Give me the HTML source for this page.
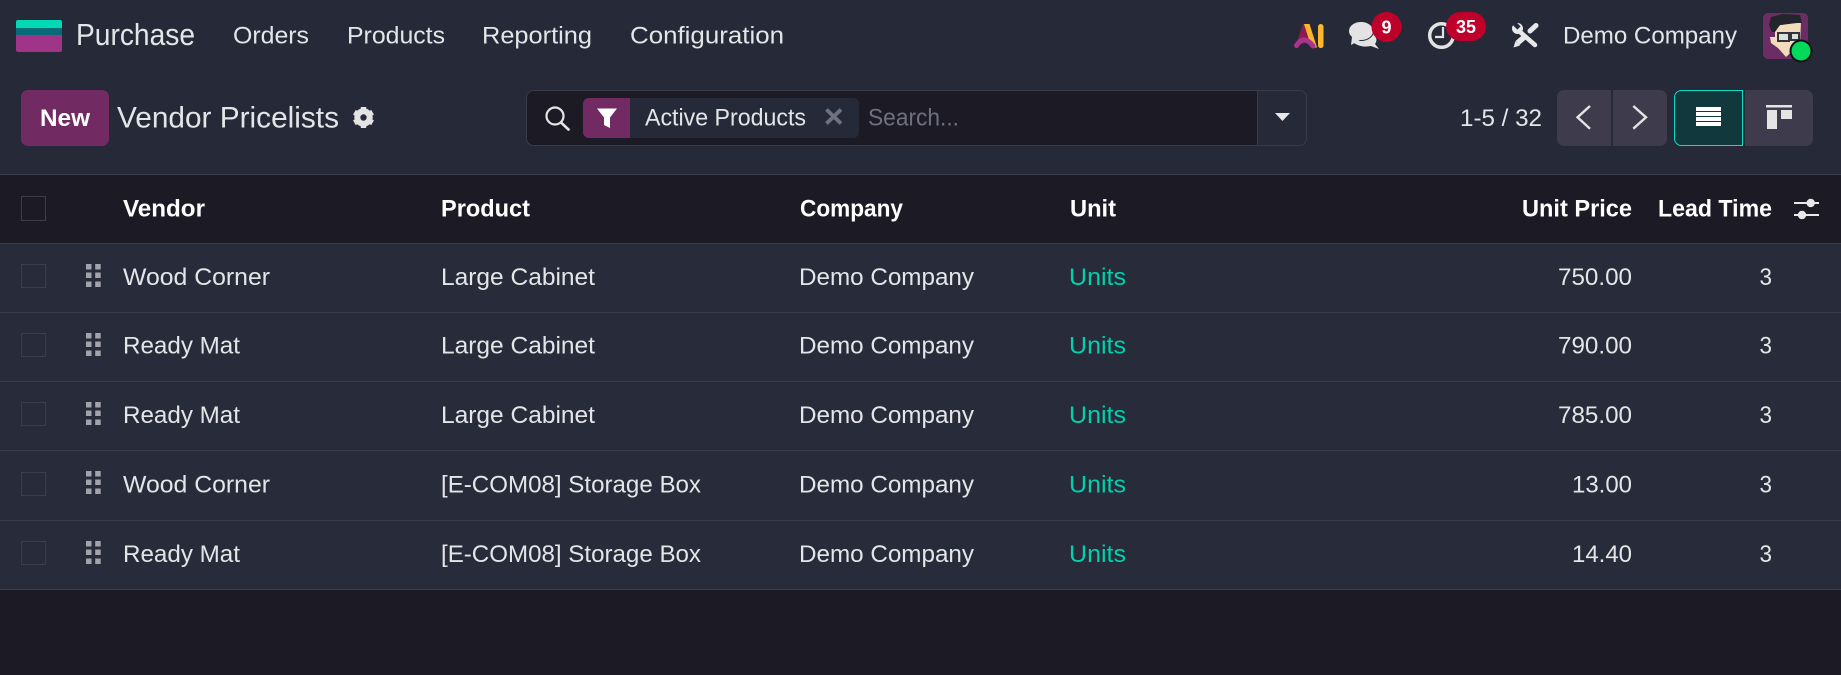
<!DOCTYPE html>
<html lang="en">
<head>
<meta charset="utf-8">
<title>Vendor Pricelists</title>
<style>
html,body{margin:0;padding:0;background:#1c1a24;width:1841px;height:675px;overflow:hidden}
svg{display:block}
text{font-family:"Liberation Sans",sans-serif;fill:#e4e5e8;font-size:24px}
.b{font-weight:700;fill:#fff}
.u{fill:#00d1ac}
</style>
</head>
<body>
<svg xmlns="http://www.w3.org/2000/svg" width="1841" height="675" viewBox="0 0 1841 675">
<defs>
<g id="h" fill="#a2a3ab"><rect x="86" y="0" width="5.500" height="5.500"/><rect x="95.200" y="0" width="5.500" height="5.500"/><rect x="86" y="8.500" width="5.500" height="5.500"/><rect x="95.200" y="8.500" width="5.500" height="5.500"/><rect x="86" y="17.500" width="5.500" height="5.500"/><rect x="95.200" y="17.500" width="5.500" height="5.500"/></g>
</defs>
<rect width="1841" height="675" fill="#1c1a24"/>
<rect width="1841" height="174" fill="#262a38"/>
<rect y="174" width="1841" height="1" fill="#3d3c4b"/>

<!-- logo -->
<path d="M16 35H62V50a2 2 0 0 1-2 2H18a2 2 0 0 1-2-2Z" fill="#a03588"/>
<rect x="16" y="28" width="46" height="7" fill="#066a78"/>
<path d="M16 28V22a2 2 0 0 1 2-2H60a2 2 0 0 1 2 2V28Z" fill="#00d9b4"/>

<text x="76" y="45" style="font-size:31px" textLength="119" lengthAdjust="spacingAndGlyphs">Purchase</text>
<text x="233" y="43.500" textLength="76" lengthAdjust="spacingAndGlyphs">Orders</text>
<text x="347" y="43.500" textLength="98" lengthAdjust="spacingAndGlyphs">Products</text>
<text x="482" y="43.500" textLength="110" lengthAdjust="spacingAndGlyphs">Reporting</text>
<text x="630" y="43.500" textLength="154" lengthAdjust="spacingAndGlyphs">Configuration</text>

<!-- AI logo -->
<path d="M1303 24H1308L1313 42L1296 45Z" fill="#8a1b4c"/>
<path d="M1304 24H1309.500L1317 47.500H1311.500Z" fill="#fdb52b"/>
<path d="M1296.500 45.500Q1304 34 1313 46" fill="none" stroke="#a6358b" stroke-width="5" stroke-linecap="round"/>
<rect x="1318" y="24" width="5.500" height="24" rx="2.700" fill="#fdb92d"/>

<!-- chat -->
<path d="M1364 31q8 1 11 5q3 4 0 8l4 5l-8-3q-10 2-17-3Z" fill="#e3e3e3"/>
<ellipse cx="1361" cy="31" rx="12.500" ry="9.500" fill="#e3e3e3" stroke="#262a38" stroke-width="1"/>
<path d="M1352 37l-1 8l9-5Z" fill="#e3e3e3"/>
<circle cx="1386.500" cy="27" r="15" fill="#bf002b"/>
<text class="b" x="1381.500" y="33.500" style="font-size:18px" textLength="10" lengthAdjust="spacingAndGlyphs">9</text>

<!-- clock -->
<circle cx="1441.500" cy="35.500" r="11.800" fill="none" stroke="#e3e3e3" stroke-width="3.500"/>
<path d="M1443 27V37H1435" fill="none" stroke="#e3e3e3" stroke-width="2.200"/>
<rect x="1446" y="12" width="40" height="29" rx="14.500" fill="#bf002b"/>
<text class="b" x="1456" y="33" style="font-size:18px" textLength="20" lengthAdjust="spacingAndGlyphs">35</text>

<!-- tools -->
<path d="M1519 31L1535 45" stroke="#e8e8e8" stroke-width="4.500" stroke-linecap="round" fill="none"/>
<circle cx="1517.500" cy="28.500" r="5.500" fill="#e8e8e8"/>
<path d="M1513 22L1519 28" stroke="#262a38" stroke-width="4.500"/>
<path d="M1536 25.500L1530 31" stroke="#e8e8e8" stroke-width="5" stroke-linecap="round" fill="none"/>
<path d="M1527 34.500L1522 39" stroke="#262a38" stroke-width="0" fill="none"/>
<path d="M1525 36.500L1517.500 43" stroke="#e8e8e8" stroke-width="5.500" fill="none"/>
<path d="M1515.500 41L1520 45.500L1513.500 47.500Z" fill="#e8e8e8"/>
<text x="1563" y="43.500" textLength="174" lengthAdjust="spacingAndGlyphs">Demo Company</text>

<!-- avatar -->
<rect x="1763" y="13" width="45" height="46" rx="5" fill="#6c2c64"/>
<path d="M1775 26L1801 22L1800 44L1786 57L1778 48L1771 43L1770 37L1775 37Z" fill="#f2dcbc"/>
<path d="M1769 25L1771 17L1783 14L1800 15L1802 23L1797 23L1780 25L1775 32L1772 32Z" fill="#23252c"/>
<rect x="1778" y="33" width="11" height="8" fill="#d9e2dc" stroke="#33343c" stroke-width="2"/>
<rect x="1791" y="33" width="8" height="7" fill="#d9e2dc" stroke="#33343c" stroke-width="2"/>
<circle cx="1801" cy="51" r="11.500" fill="#10121a"/>
<circle cx="1801" cy="51" r="9.500" fill="#00d95a"/>

<!-- control panel -->
<rect x="21" y="90" width="88" height="56" rx="7" fill="#722b62"/>
<text class="b" x="40" y="126" textLength="50" lengthAdjust="spacingAndGlyphs">New</text>
<text x="117" y="127.500" style="font-size:30px" textLength="222" lengthAdjust="spacingAndGlyphs">Vendor Pricelists</text>
<g transform="translate(363.500 117.500)" fill="#e3e3e3">
<circle r="6.200" fill="none" stroke="#e3e3e3" stroke-width="6"/>
<g id="t"><rect x="-2.700" y="-10.500" width="5.400" height="5"/></g>
<use href="#t" transform="rotate(60)"/><use href="#t" transform="rotate(120)"/><use href="#t" transform="rotate(180)"/><use href="#t" transform="rotate(240)"/><use href="#t" transform="rotate(300)"/>
</g>

<!-- search -->
<rect x="526.500" y="90.500" width="780" height="55" rx="7" fill="#262a38" stroke="#3a3b4a"/>
<path d="M1257 91H533.500a7 7 0 0 0-6.500 7V138a7 7 0 0 0 6.500 7H1257Z" fill="#1c1a24"/>
<rect x="1257" y="91" width="1" height="54" fill="#3a3b4a"/>
<circle cx="555" cy="116" r="8.500" fill="none" stroke="#e6e6e6" stroke-width="2.200"/>
<path d="M561 122.500L568.500 129.500" stroke="#e6e6e6" stroke-width="2.600" stroke-linecap="round"/>
<rect x="583" y="98" width="276" height="40" rx="6" fill="#262a38"/>
<path d="M630 98H589a6 6 0 0 0-6 6V132a6 6 0 0 0 6 6H630Z" fill="#722b62"/>
<path d="M597 108.500H617L610 117.500V128L604 125V117.500Z" fill="#fff"/>
<text x="645" y="125.700" textLength="161" lengthAdjust="spacingAndGlyphs">Active Products</text>
<path d="M826.500 109.500L841 123.500M841 109.500L826.500 123.500" stroke="#6f7282" stroke-width="3.800"/>
<text x="868" y="125.700" style="fill:#6e6f80" textLength="91" lengthAdjust="spacingAndGlyphs">Search...</text>
<path d="M1275 113H1290L1282.500 121Z" fill="#e8e8e8"/>

<!-- pager -->
<text x="1460" y="126" textLength="82" lengthAdjust="spacingAndGlyphs">1-5 / 32</text>
<path d="M1611 90H1564a7 7 0 0 0-7 7V139a7 7 0 0 0 7 7H1611Z" fill="#3d3b4c"/>
<path d="M1613 90H1660a7 7 0 0 1 7 7V139a7 7 0 0 1-7 7H1613Z" fill="#3d3b4c"/>
<path d="M1590 106L1577.500 117.300L1590 128.700" fill="none" stroke="#e4e4e4" stroke-width="2.400"/>
<path d="M1633.300 106L1646 117.300L1633.300 128.700" fill="none" stroke="#e4e4e4" stroke-width="2.400"/>
<path d="M1742.500 90.500H1681a7 7 0 0 0-6.500 7V139a7 7 0 0 0 6.500 6.500H1742.500Z" fill="#11393d" stroke="#10dcc4"/>
<rect x="1696" y="107" width="25" height="4" fill="#fff"/><rect x="1696" y="112" width="25" height="4" fill="#fff"/><rect x="1696" y="117" width="25" height="4" fill="#fff"/><rect x="1696" y="122" width="25" height="4" fill="#fff"/>
<path d="M1745 90H1806a7 7 0 0 1 7 7V139a7 7 0 0 1-7 7H1745Z" fill="#3d3b4c"/>
<rect x="1766" y="105" width="26" height="2.500" fill="#e4e4e4"/>
<rect x="1767" y="110" width="10" height="19" fill="#e4e4e4"/>
<rect x="1781" y="110" width="11" height="9" fill="#e4e4e4"/>

<!-- table -->
<rect y="175" width="1841" height="68" fill="#1c1a24"/>
<rect y="244" width="1841" height="345" fill="#282b39"/>
<rect y="243" width="1841" height="1" fill="#3d3c4b"/>
<rect y="312" width="1841" height="1" fill="#3d3c4b"/>
<rect y="381" width="1841" height="1" fill="#3d3c4b"/>
<rect y="450" width="1841" height="1" fill="#3d3c4b"/>
<rect y="520" width="1841" height="1" fill="#3d3c4b"/>
<rect y="589" width="1841" height="1" fill="#3d3c4b"/>

<rect x="21.500" y="196.500" width="24" height="24" fill="none" stroke="#3d3c4b"/>
<text class="b" x="123" y="216.700" textLength="82" lengthAdjust="spacingAndGlyphs">Vendor</text>
<text class="b" x="441" y="216.700" textLength="89" lengthAdjust="spacingAndGlyphs">Product</text>
<text class="b" x="800" y="216.700" textLength="103" lengthAdjust="spacingAndGlyphs">Company</text>
<text class="b" x="1070" y="216.700" textLength="46" lengthAdjust="spacingAndGlyphs">Unit</text>
<text class="b" x="1522" y="216.700" textLength="110" lengthAdjust="spacingAndGlyphs">Unit Price</text>
<text class="b" x="1658" y="216.700" textLength="114" lengthAdjust="spacingAndGlyphs">Lead Time</text>
<path d="M1794 203H1819M1794 215H1819" stroke="#e8e8e8" stroke-width="2"/>
<circle cx="1810.700" cy="203" r="4.200" fill="#e8e8e8"/><circle cx="1802" cy="215" r="4.200" fill="#e8e8e8"/>

<!-- row 1 -->
<rect x="21.500" y="264.500" width="24" height="23" fill="none" stroke="#3d3c4b"/>
<use href="#h" y="264"/>
<text x="123" y="285" textLength="147" lengthAdjust="spacingAndGlyphs">Wood Corner</text>
<text x="441" y="285" textLength="154" lengthAdjust="spacingAndGlyphs">Large Cabinet</text>
<text x="799" y="285" textLength="175" lengthAdjust="spacingAndGlyphs">Demo Company</text>
<text class="u" x="1069" y="285" textLength="57" lengthAdjust="spacingAndGlyphs">Units</text>
<text x="1558" y="285" textLength="74" lengthAdjust="spacingAndGlyphs">750.00</text>
<text x="1759.500" y="285" textLength="12.500" lengthAdjust="spacingAndGlyphs">3</text>

<!-- row 2 -->
<rect x="21.500" y="333.500" width="24" height="23" fill="none" stroke="#3d3c4b"/>
<use href="#h" y="333"/>
<text x="123" y="353.500" textLength="117" lengthAdjust="spacingAndGlyphs">Ready Mat</text>
<text x="441" y="353.500" textLength="154" lengthAdjust="spacingAndGlyphs">Large Cabinet</text>
<text x="799" y="353.500" textLength="175" lengthAdjust="spacingAndGlyphs">Demo Company</text>
<text class="u" x="1069" y="353.500" textLength="57" lengthAdjust="spacingAndGlyphs">Units</text>
<text x="1558" y="353.500" textLength="74" lengthAdjust="spacingAndGlyphs">790.00</text>
<text x="1759.500" y="353.500" textLength="12.500" lengthAdjust="spacingAndGlyphs">3</text>

<!-- row 3 -->
<rect x="21.500" y="402.500" width="24" height="23" fill="none" stroke="#3d3c4b"/>
<use href="#h" y="402"/>
<text x="123" y="423" textLength="117" lengthAdjust="spacingAndGlyphs">Ready Mat</text>
<text x="441" y="423" textLength="154" lengthAdjust="spacingAndGlyphs">Large Cabinet</text>
<text x="799" y="423" textLength="175" lengthAdjust="spacingAndGlyphs">Demo Company</text>
<text class="u" x="1069" y="423" textLength="57" lengthAdjust="spacingAndGlyphs">Units</text>
<text x="1558" y="423" textLength="74" lengthAdjust="spacingAndGlyphs">785.00</text>
<text x="1759.500" y="423" textLength="12.500" lengthAdjust="spacingAndGlyphs">3</text>

<!-- row 4 -->
<rect x="21.500" y="472.500" width="24" height="23" fill="none" stroke="#3d3c4b"/>
<use href="#h" y="471"/>
<text x="123" y="492.500" textLength="147" lengthAdjust="spacingAndGlyphs">Wood Corner</text>
<text x="441" y="492.500" textLength="260" lengthAdjust="spacingAndGlyphs">[E-COM08] Storage Box</text>
<text x="799" y="492.500" textLength="175" lengthAdjust="spacingAndGlyphs">Demo Company</text>
<text class="u" x="1069" y="492.500" textLength="57" lengthAdjust="spacingAndGlyphs">Units</text>
<text x="1572" y="492.500" textLength="60" lengthAdjust="spacingAndGlyphs">13.00</text>
<text x="1759.500" y="492.500" textLength="12.500" lengthAdjust="spacingAndGlyphs">3</text>

<!-- row 5 -->
<rect x="21.500" y="541.500" width="24" height="23" fill="none" stroke="#3d3c4b"/>
<use href="#h" y="541"/>
<text x="123" y="562" textLength="117" lengthAdjust="spacingAndGlyphs">Ready Mat</text>
<text x="441" y="562" textLength="260" lengthAdjust="spacingAndGlyphs">[E-COM08] Storage Box</text>
<text x="799" y="562" textLength="175" lengthAdjust="spacingAndGlyphs">Demo Company</text>
<text class="u" x="1069" y="562" textLength="57" lengthAdjust="spacingAndGlyphs">Units</text>
<text x="1572" y="562" textLength="60" lengthAdjust="spacingAndGlyphs">14.40</text>
<text x="1759.500" y="562" textLength="12.500" lengthAdjust="spacingAndGlyphs">3</text>
</svg>
</body>
</html>
